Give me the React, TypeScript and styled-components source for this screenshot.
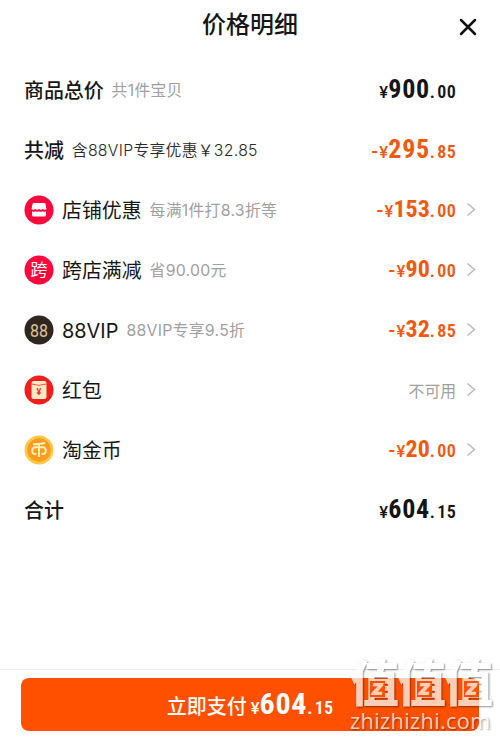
import React from 'react';
import styled, { createGlobalStyle } from 'styled-components';

const GlobalStyle = createGlobalStyle`
  * {
    box-sizing: border-box;
  }

  body {
    margin: 0;
    background: #fff;
    color: #161616;
    font-family: Inter, 'Noto Sans CJK SC', sans-serif;
  }
`;

type Tone = 'dark' | 'orange' | 'light';

const tones: Record<Tone, string> = {
  dark: '#141414',
  orange: '#f0590f',
  light: '#fff',
};

const Sheet = styled.main`
  display: flex;
  flex-direction: column;
  width: 500px;
  height: 739px;
  overflow: hidden;
`;

const Header = styled.header`
  display: grid;
  grid-template-columns: 1fr auto 1fr;
  height: 60px;
  padding: 0 23px;
`;

const Title = styled.h1`
  grid-column: 2;
  margin: 0;
  font-size: 24px;
  font-weight: 500;
  line-height: 49px;
`;

const CloseButton = styled.button`
  justify-self: end;
  display: flex;
  height: 18px;
  margin-top: 18px;
  padding: 0;
  border: 0;
  background: none;
`;

const List = styled.ul`
  flex: 1;
  margin: 0;
  padding: 0 24px;
  list-style: none;
`;

const Row = styled.li`
  display: flex;
  align-items: center;
  height: 60px;
`;

const RowIcon = styled.svg`
  flex: none;
  width: 30px;
  height: 30px;
  margin: 0 8px 1px 0;
`;

const Label = styled.span<{ $strong?: boolean }>`
  padding-top: 1px;
  font-size: 19.9px;
  font-weight: ${({ $strong }) => ($strong ? 500 : 400)};
  line-height: 30px;
  white-space: nowrap;
`;

const Note = styled.span<{ $dark?: boolean }>`
  margin-left: 8px;
  padding-top: 2px;
  color: ${({ $dark }) => ($dark ? '#2a2a2a' : '#a0a0a0')};
  font-size: 15.8px;
  font-weight: ${({ $dark }) => ($dark ? 350 : 400)};
  letter-spacing: 0.3px;
  line-height: 30px;
  white-space: nowrap;
`;

const Trailing = styled.div`
  display: flex;
  align-items: center;
  margin-left: auto;
`;

const Unavailable = styled.span`
  color: #a0a0a0;
  font-size: 15.8px;
`;

const ArrowSlot = styled.span`
  display: flex;
  justify-content: flex-end;
  width: 20px;
`;

const Amount = styled.span<{ $tone: Tone; $size: number }>`
  padding-top: ${({ $size }) => ($size > 24 ? 2 : 0)}px;
  color: ${({ $tone }) => tones[$tone]};
  font-family: Roboto, 'Liberation Sans', sans-serif;
  font-size: ${({ $size }) => $size}px;
  font-weight: 700;
  font-stretch: 75%;
  letter-spacing: ${({ $size }) => ($size > 24 ? 0.7 : 0)}px;
  line-height: 30px;
  white-space: nowrap;
`;

const Currency = styled.small`
  font-size: 16.5px;
  font-weight: 500;
  font-stretch: 100%;
  letter-spacing: 0.2px;
`;

const Minus = styled.span`
  margin-right: 1px;
  font-size: 20px;
`;

const Cents = styled.small`
  font-size: 18px;
  font-weight: 600;
  letter-spacing: 0.3px;
`;

const Point = styled.span`
  margin-right: 2px;
`;

const Footer = styled.footer`
  position: relative;
  height: 70px;
  padding: 8px 21px;
  border-top: 1px solid #ececec;
`;

const PayButton = styled.button`
  display: flex;
  align-items: center;
  justify-content: center;
  gap: 4px;
  width: 458px;
  height: 53px;
  padding: 2px 0 0;
  border: 0;
  border-radius: 8px;
  background: #ff5000;
  color: #fff;
  font-family: inherit;
  font-size: 20px;
  font-weight: 500;
`;

const Watermark = styled.div`
  position: absolute;
  top: -17px;
  left: 350px;
  width: 144px;
  color: #fff;
  opacity: 0.72;
  text-shadow: 1px 1px 2px rgba(0, 0, 0, 0.6);
`;

const Marks = styled.div`
  display: flex;
  height: 56px;
`;

const Mark = styled.span`
  position: relative;
  width: 47px;
  font-family: 'Noto Sans CJK SC', sans-serif;
  font-size: 49px;
  font-weight: 900;
  line-height: 54px;
`;

const MarkLetter = styled.b`
  position: absolute;
  top: 28px;
  left: 20px;
  width: 15px;
  height: 16px;
  background: #ff5000;
  font: italic 900 22px/13px Inter, sans-serif;
  text-align: center;
  text-shadow: none;
`;

const Domain = styled.div`
  font-family: 'Open Sans', sans-serif;
  font-size: 21.6px;
  font-weight: 500;
  letter-spacing: 0.4px;
  line-height: 24px;
`;

type PriceProps = {
  value: string;
  tone?: Tone;
  size?: number;
};

const Price = ({ value, tone = 'orange', size = 24 }: PriceProps) => {
  const [whole, cents] = value.replace('-', '').split('.');
  return (
    <Amount $tone={tone} $size={size}>
      <Currency>
        {value.startsWith('-') && <Minus>-</Minus>}¥
      </Currency>
      {whole}
      <Cents>
        <Point>.</Point>
        {cents}
      </Cents>
    </Amount>
  );
};

const Arrow = () => (
  <svg width="10" height="16" viewBox="0 0 10 16" fill="none">
    <path d="M1.5 1.5l7 6-7 6" stroke="#bbb" strokeWidth="1.6" />
  </svg>
);

const ShopIcon = () => (
  <RowIcon viewBox="0 0 30 30">
    <circle cx="15" cy="15" r="14.5" fill="#fa0a3c" />
    <path
      d="M10 8h10q1.3 0 1.6 1.3l.8 4.6c-1.2 1.1-2.4 1.1-3.6.2-1.2.8-2.5.8-3.8 0-1.2.8-2.5.8-3.8 0-1.2.9-2.4.9-3.6-.2l.8-4.6Q8.7 8 10 8z"
      fill="#fff"
    />
    <path
      d="M8 16.2c1.2.8 2.4.8 3.5 0 1.2.8 2.4.8 3.5 0 1.2.8 2.4.8 3.5 0 1.1.8 2.3.8 3.5 0v3.9a1.5 1.5 0 01-1.5 1.5h-11a1.5 1.5 0 01-1.5-1.5z"
      fill="#fff"
    />
  </RowIcon>
);

const CrossShopIcon = () => (
  <RowIcon viewBox="0 0 30 30">
    <circle cx="15" cy="15" r="14.5" fill="#fa0a3c" />
    <text x="15" y="21.3" fill="#fff" fontSize="17" textAnchor="middle">
      跨
    </text>
  </RowIcon>
);

const VipIcon = () => (
  <RowIcon viewBox="0 0 30 30">
    <circle cx="15" cy="15" r="14.5" fill="#302621" />
    <text x="15" y="21.6" fill="#dcc39d" fontFamily="Roboto" fontSize="19" fontWeight="400" textAnchor="middle" textLength="18" lengthAdjust="spacingAndGlyphs">
      88
    </text>
  </RowIcon>
);

const RedPacketIcon = () => (
  <RowIcon viewBox="0 0 30 30">
    <circle cx="15" cy="15" r="14.5" fill="#f21d1d" />
    <rect x="7.5" y="6" width="15" height="18" rx="2" fill="#ffeac6" />
    <path d="M7.5 9q7.5 2.6 15 0" fill="none" stroke="#ee5a3b" />
    <text x="15" y="19.5" fill="#e8362a" fontFamily="Roboto" fontSize="9" fontWeight="700" textAnchor="middle">
      ¥
    </text>
  </RowIcon>
);

const CoinIcon = () => (
  <RowIcon viewBox="0 0 30 30">
    <circle cx="15" cy="15" r="14.5" fill="#fcc849" />
    <circle cx="15" cy="15" r="11.8" fill="#f99d20" />
    <g fill="none" stroke="#fff0b8" strokeWidth="2">
      <path d="M9 9.3q6 0 12-1.3M15 9v13" />
      <path d="M12.5 19H11a2.7 2.7 0 01-2.7-2.7V15a2.7 2.7 0 012.7-2.7h8a2.7 2.7 0 012.7 2.7v1.3A2.7 2.7 0 0119 19h-1.5" />
    </g>
  </RowIcon>
);

const discounts = [
  { label: '店铺优惠', note: '每满1件打8.3折等', value: '-153.00', Icon: ShopIcon },
  { label: '跨店满减', note: '省90.00元', value: '-90.00', Icon: CrossShopIcon },
  { label: '88VIP', note: '88VIP专享9.5折', value: '-32.85', Icon: VipIcon },
  { label: '红包', Icon: RedPacketIcon },
  { label: '淘金币', value: '-20.00', Icon: CoinIcon },
];

const App = () => {
  return (
    <Sheet>
      <GlobalStyle />
      <Header>
        <Title>价格明细</Title>
        <CloseButton aria-label="关闭">
          <svg width="18" height="18" viewBox="0 0 18 18">
            <path d="M2 2l14 14M16 2L2 16" stroke="#111" strokeWidth="2.5" strokeLinecap="round" />
          </svg>
        </CloseButton>
      </Header>
      <List>
        <Row>
          <Label $strong>商品总价</Label>
          <Note>共1件宝贝</Note>
          <Trailing>
            <Price value="900.00" tone="dark" size={26} />
            <ArrowSlot />
          </Trailing>
        </Row>
        <Row>
          <Label $strong>共减</Label>
          <Note $dark>含88VIP专享优惠￥32.85</Note>
          <Trailing>
            <Price value="-295.85" size={26} />
            <ArrowSlot />
          </Trailing>
        </Row>
        {discounts.map(({ label, note, value, Icon }) => (
          <Row key={label}>
            <Icon />
            <Label>{label}</Label>
            {note && <Note>{note}</Note>}
            <Trailing>
              {value ? <Price value={value} /> : <Unavailable>不可用</Unavailable>}
              <ArrowSlot>
                <Arrow />
              </ArrowSlot>
            </Trailing>
          </Row>
        ))}
        <Row>
          <Label $strong>合计</Label>
          <Trailing>
            <Price value="604.15" tone="dark" size={26} />
            <ArrowSlot />
          </Trailing>
        </Row>
      </List>
      <Footer>
        <PayButton>
          立即支付
          <Price value="604.15" tone="light" size={30} />
        </PayButton>
        <Watermark>
          <Marks>
            {[0, 1, 2].map((n) => (
              <Mark key={n}>
                值<MarkLetter>z</MarkLetter>
              </Mark>
            ))}
          </Marks>
          <Domain>zhizhizhi.com</Domain>
        </Watermark>
      </Footer>
    </Sheet>
  );
};

export default App;
